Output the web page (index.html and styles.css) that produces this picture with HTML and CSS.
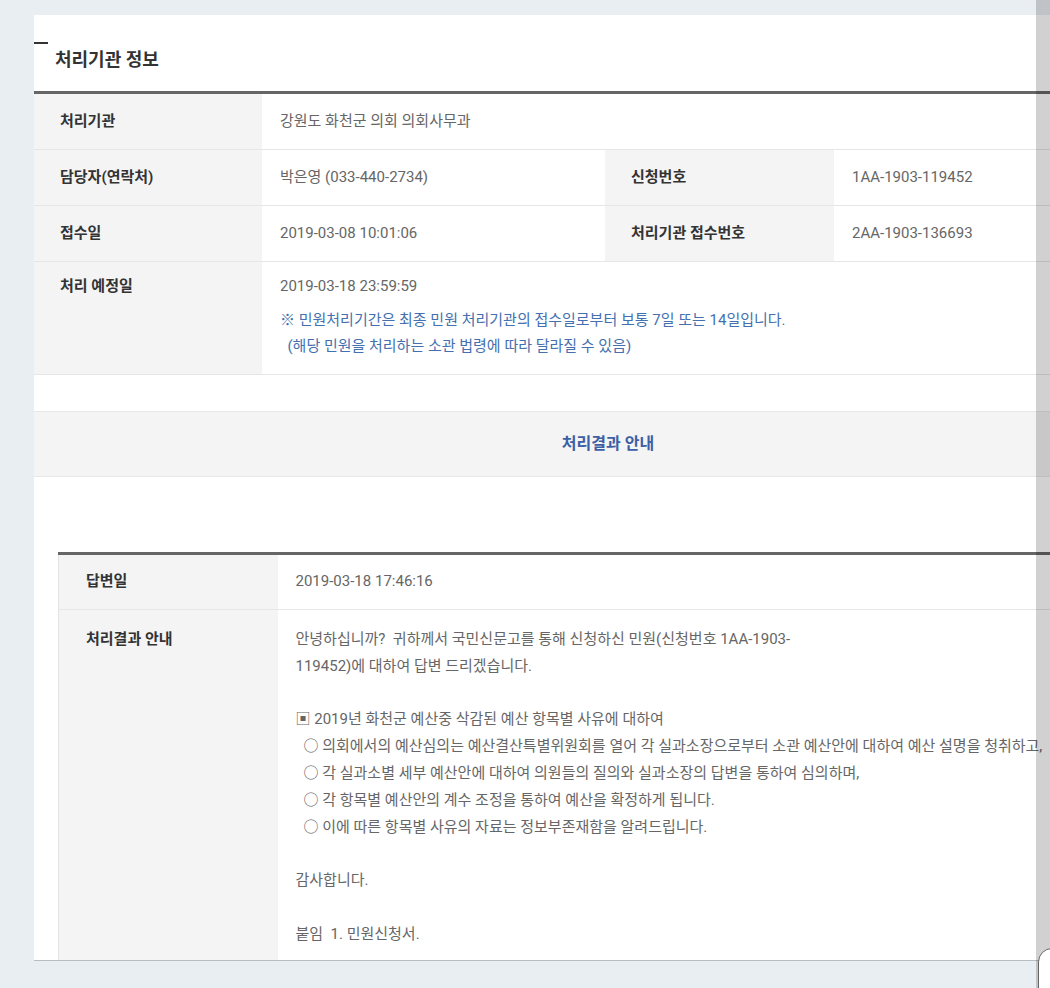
FILE: index.html
```html
<!DOCTYPE html>
<html lang="ko">
<head>
  <meta charset="UTF-8" />
  <meta name="viewport" content="width=device-width, initial-scale=1.0" />
  <title>민원 처리결과</title>
  <link rel="stylesheet" href="styles.css">
</head>
<body>

  <div class="page">
    <section class="panel">
      <h2 class="section-title">처리기관 정보</h2>

      <table class="info-table">
        <colgroup>
          <col style="width:228px"><col style="width:343px"><col style="width:229px"><col>
        </colgroup>
        <tr>
          <th>처리기관</th>
          <td colspan="3">강원도 화천군 의회 의회사무과</td>
        </tr>
        <tr>
          <th>담당자(연락처)</th>
          <td>박은영 (033-440-2734)</td>
          <th>신청번호</th>
          <td>1AA-1903-119452</td>
        </tr>
        <tr>
          <th>접수일</th>
          <td>2019-03-08 10:01:06</td>
          <th>처리기관 접수번호</th>
          <td>2AA-1903-136693</td>
        </tr>
        <tr class="due-row">
          <th>처리 예정일</th>
          <td colspan="3">
            2019-03-18 23:59:59
            <p class="notice">※ 민원처리기간은 최종 민원 처리기관의 접수일로부터 보통 7일 또는 14일입니다.<br>&nbsp;&nbsp;(해당 민원을 처리하는 소관 법령에 따라 달라질 수 있음)</p>
          </td>
        </tr>
      </table>

      <div class="result-band">처리결과 안내</div>

      <table class="answer-table">
        <colgroup>
          <col style="width:219px"><col>
        </colgroup>
        <tr>
          <th>답변일</th>
          <td>2019-03-18 17:46:16</td>
        </tr>
        <tr class="answer-row">
          <th>처리결과 안내</th>
          <td>
            <div class="answer">
              <p>안녕하십니까?&nbsp; 귀하께서 국민신문고를 통해 신청하신 민원(신청번호 1AA-1903-<br>119452)에 대하여 답변 드리겠습니다.</p>
              <p>▣ 2019년 화천군 예산중 삭감된 예산 항목별 사유에 대하여<br>
                <span class="item">○ 의회에서의 예산심의는 예산결산특별위원회를 열어 각 실과소장으로부터 소관 예산안에 대하여 예산 설명을 청취하고,</span><br>
                <span class="item">○ 각 실과소별 세부 예산안에 대하여 의원들의 질의와 실과소장의 답변을 통하여 심의하며,</span><br>
                <span class="item">○ 각 항목별 예산안의 계수 조정을 통하여 예산을 확정하게 됩니다.</span><br>
                <span class="item">○ 이에 따른 항목별 사유의 자료는 정보부존재함을 알려드립니다.</span></p>
              <p>감사합니다.</p>
              <p>붙임&nbsp; 1. 민원신청서.</p>
            </div>
          </td>
        </tr>
      </table>
    </section>
  </div>

  <div class="scroll-track"></div>
  <div class="float-corner"></div>

</body>
</html>
```

FILE: styles.css
```css
/* Reset */
* {
  box-sizing: border-box;
  margin: 0;
  padding: 0;
}

html, body {
  height: 100%;
  overflow: hidden;
}

body {
  background: #e9eef3;
  font-family: Roboto, "Noto Sans CJK KR", sans-serif;
  font-size: 15px;
  color: #666;
}

.page {
  padding: 15px 0 0 34px;
}

/* White panel, wider than the window */
.panel {
  width: 1148px;
  background: #fff;
  border-bottom: 1px solid #b8bcc0;
}

.section-title {
  position: relative;
  padding: 34px 0 20px 21px;
  font-size: 18px;
  line-height: 22px;
  font-weight: 700;
  color: #333;
}

.section-title::before {
  content: "";
  position: absolute;
  left: 0;
  top: 27px;
  width: 14px;
  height: 2px;
  background: #333;
}

/* Tables */
table {
  border-collapse: collapse;
  table-layout: fixed;
}

th, td {
  text-align: left;
  vertical-align: top;
  line-height: 25px;
  border-bottom: 1px solid #e6e6e6;
}

th {
  background: #f4f4f4;
  color: #333;
  font-weight: 700;
}

.info-table {
  width: 1148px;
  border-top: 3px solid #666;
}

.info-table th {
  padding: 15px 24px 15px 26px;
}

.info-table td {
  padding: 15px 18px;
}

.info-table .due-row th,
.info-table .due-row td {
  padding-top: 12px;
  padding-bottom: 15px;
}

.notice {
  margin-top: 8px;
  line-height: 26px;
  color: #4470b0;
}

/* Result band */
.result-band {
  margin-top: 36px;
  height: 66px;
  line-height: 64px;
  background: #f4f4f4;
  border-top: 1px solid #e8e8e8;
  border-bottom: 1px solid #e8e8e8;
  text-align: center;
  font-size: 16px;
  font-weight: 700;
  color: #3d5fa5;
}

.answer-table {
  width: 1100px;
  margin: 75px 0 0 24px;
  border-top: 3px solid #666;
}

.answer-table th {
  padding: 14px 20px 15px 27px;
  border-left: 1px solid #e3e3e3;
}

.answer-table td {
  padding: 14px 18px 15px;
}

.answer-table .answer-row th,
.answer-table .answer-row td {
  border-bottom: none;
  line-height: 26.8px;
  padding-top: 16px;
  padding-bottom: 12px;
}

.answer {
  white-space: nowrap;
}

.answer p + p {
  margin-top: 26.8px;
}

.item {
  padding-left: 8px;
}

/* Scrollbar strip and floating button corner */
.scroll-track {
  position: fixed;
  top: 0;
  right: 0;
  width: 14px;
  height: 100%;
  background: rgba(0, 0, 0, 0.18);
}

.float-corner {
  position: fixed;
  left: 1038px;
  top: 948px;
  width: 40px;
  height: 60px;
  background: #fff;
  border: 1px solid #666;
  border-radius: 14px;
}
```
